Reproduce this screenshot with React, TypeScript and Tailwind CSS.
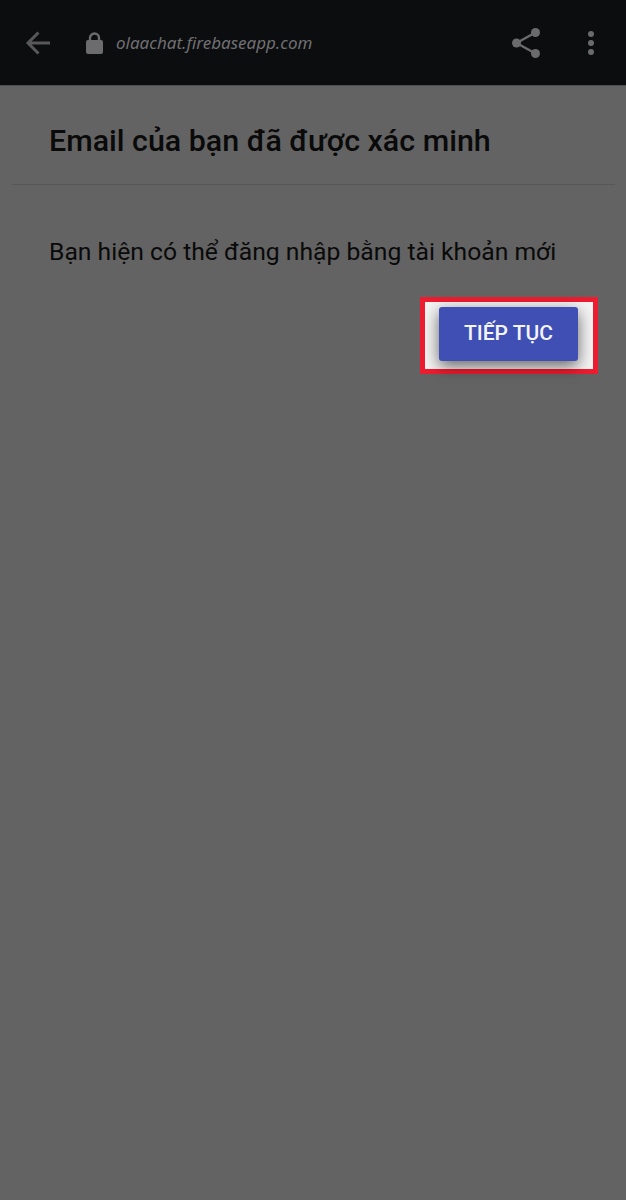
function BackIcon() {
  return (
    <svg width="25" height="24" viewBox="0 0 25 24" fill="none" stroke="#58585a" strokeWidth="3">
      <path d="M25 12H3M13.5 1.5L3 12l10.5 10.5" />
    </svg>
  );
}

function LockIcon() {
  return (
    <svg width="17" height="22" viewBox="0 0 17 22">
      <path d="M4 9V6a4.5 4.5 0 0 1 9 0v3" fill="none" stroke="#6c6c6e" strokeWidth="2.4" />
      <rect x="0" y="8" width="17" height="14" rx="2" fill="#6c6c6e" />
    </svg>
  );
}

function ShareIcon() {
  return (
    <svg width="28" height="30" viewBox="0 0 28 30" fill="#6b6b6d" stroke="#6b6b6d">
      <path d="M4.5 15L23.5 4.5M4.5 15l19 10.5" strokeWidth="2.5" fill="none" />
      <circle cx="4.5" cy="15" r="4.5" stroke="none" />
      <circle cx="23.5" cy="4.5" r="4.5" stroke="none" />
      <circle cx="23.5" cy="25.5" r="4.5" stroke="none" />
    </svg>
  );
}

export default function App() {
  return (
    <div className="relative min-h-[1200px] w-[626px] bg-[#636363] font-['Roboto',sans-serif]">
      <header className="flex h-[86px] items-center justify-between border-b border-[#505050] bg-[#0c0d0f] pl-[25px] pr-[32px]">
        <div className="flex items-center">
          <BackIcon />
          <div className="ml-[36px]">
            <LockIcon />
          </div>
          <span className="ml-[13px] font-['Noto_Sans',sans-serif] text-[17px] italic text-[#707072]">
            olaachat.firebaseapp.com
          </span>
        </div>
        <div className="flex items-center gap-[48px]">
          <ShareIcon />
          <div className="flex flex-col gap-[3px]">
            <span className="size-[6px] rounded-full bg-[#6b6b6d]" />
            <span className="size-[6px] rounded-full bg-[#6b6b6d]" />
            <span className="size-[6px] rounded-full bg-[#6b6b6d]" />
          </div>
        </div>
      </header>

      <main className="pl-[12px] pr-[11px]">
        <h1 className="border-b border-[#575757] pb-[25px] pl-[37px] pt-[36px] text-[30.4px] font-medium leading-[37px] text-[#0a0a0a]">
          Email của bạn đã được xác minh
        </h1>
        <p className="pl-[37px] pt-[51px] text-[24.7px] leading-[32px] text-[#0a0a0a]">
          Bạn hiện có thể đăng nhập bằng tài khoản mới
        </p>
        <div className="flex justify-end pr-[37px] pt-[39px]">
          <div className="relative">
            <div className="absolute -bottom-[13px] -left-[19px] -right-[20px] -top-[10px] border-[5px] border-[#ee1c30] bg-[#f4f4f4]" />
            <button className="relative h-[54px] w-[139px] rounded-[3px] bg-[#3f4fb3] text-[21px] font-medium text-[#f4f5fb] shadow-[0_5px_16px_rgba(0,0,0,0.6)]">
              TIẾP TỤC
            </button>
          </div>
        </div>
      </main>
    </div>
  );
}
